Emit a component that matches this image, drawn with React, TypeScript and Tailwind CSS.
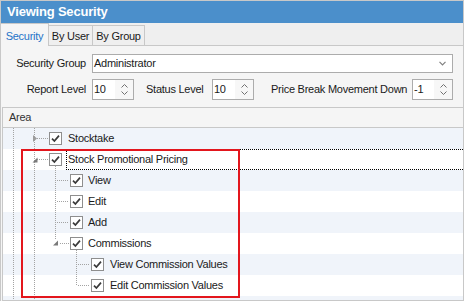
import React from "react";

type Row = { label: string; level: number; focused?: boolean };

const rows: Row[] = [
  { label: "Stocktake", level: 0 },
  { label: "Stock Promotional Pricing", level: 0, focused: true },
  { label: "View", level: 1 },
  { label: "Edit", level: 1 },
  { label: "Add", level: 1 },
  { label: "Commissions", level: 1 },
  { label: "View Commission Values", level: 2 },
  { label: "Edit Commission Values", level: 2 },
  { label: "", level: -1 },
];

const padByLevel: Record<number, string> = {
  0: "pl-[46px]",
  1: "pl-[67px]",
  2: "pl-[88px]",
  [-1]: "",
};

const textMlByLevel: Record<number, string> = {
  0: "ml-[6px]",
  1: "ml-[5px]",
  2: "ml-[6px]",
  [-1]: "",
};

function CheckBox() {
  return (
    <span className="w-[13px] h-[13px] border border-[#8e8e8e] bg-white flex items-center justify-center shrink-0">
      <svg width="11" height="11" viewBox="0 0 11 11">
        <path d="M2 5.6 L4.4 8 L9 2.6" stroke="#3a3a3a" strokeWidth="1.7" fill="none" />
      </svg>
    </span>
  );
}

function Spinner({ value }: { value: string }) {
  return (
    <div className="h-[21px] border border-[#acacac] bg-white flex items-center">
      <span className="pl-[1px] flex-1">{value}</span>
      <span className="w-[18px] h-full bg-[#f7f7f7] flex flex-col items-center justify-center gap-[3px]">
        <svg width="7" height="4" viewBox="0 0 7 4">
          <path d="M0.5 3.5 L3.5 0.5 L6.5 3.5" stroke="#707070" strokeWidth="1" fill="none" />
        </svg>
        <svg width="7" height="4" viewBox="0 0 7 4">
          <path d="M0.5 0.5 L3.5 3.5 L6.5 0.5" stroke="#707070" strokeWidth="1" fill="none" />
        </svg>
      </span>
    </div>
  );
}

function TreeLines() {
  const dot = { stroke: "#a3a3a3", strokeWidth: 1, strokeDasharray: "1 1", fill: "none" } as const;
  return (
    <svg className="absolute left-0 top-0 pointer-events-none" width="260" height="175" viewBox="0 0 260 175">
      <line x1="10.5" y1="0" x2="10.5" y2="175" {...dot} />
      <line x1="31.5" y1="0" x2="31.5" y2="175" {...dot} />
      <line x1="34" y1="10.5" x2="45" y2="10.5" {...dot} />
      <line x1="34" y1="31.5" x2="45" y2="31.5" {...dot} />
      <line x1="52.5" y1="38" x2="52.5" y2="112" {...dot} />
      <line x1="54" y1="52.5" x2="66" y2="52.5" {...dot} />
      <line x1="54" y1="73.5" x2="66" y2="73.5" {...dot} />
      <line x1="54" y1="94.5" x2="66" y2="94.5" {...dot} />
      <line x1="57" y1="115.5" x2="66" y2="115.5" {...dot} />
      <line x1="73.5" y1="122" x2="73.5" y2="157.5" {...dot} />
      <line x1="75" y1="136.5" x2="87" y2="136.5" {...dot} />
      <line x1="75" y1="157.5" x2="87" y2="157.5" {...dot} />
      {/* collapsed expander */}
      <polygon points="30,7 34,10.5 30,14" fill="#9c9c9c" />
      {/* expanded expanders */}
      <polygon points="34.5,29.5 34.5,34.5 29.5,34.5" fill="#7a7a7a" />
      <polygon points="55,112.5 55,117.5 50,117.5" fill="#7a7a7a" />
    </svg>
  );
}

export default function App() {
  return (
    <div className="w-[464px] h-[301px] relative bg-[#f5f5f5] border-l border-r border-t border-[#c8c8c8] flex flex-col overflow-hidden font-['Liberation_Sans',Arial,sans-serif] text-[11px] tracking-[-0.25px] text-[#1a1a1a]">
      {/* Title bar */}
      <div className="h-[22px] shrink-0 bg-[#4b8fcb] flex items-center pl-[6px] text-white font-bold text-[13px] tracking-[-0.2px]">
        Viewing Security
      </div>

      {/* Tabs */}
      <div className="h-[23px] shrink-0 bg-[#efefef] flex items-end">
        <div className="w-[48px] h-[23px] border-t border-r border-[#c8c8c8] bg-[#f5f5f5] flex items-center justify-center pt-[2px] text-[#1e73c8]">
          Security
        </div>
        <div className="w-[44px] h-[21px] border-t border-r border-b border-[#c8c8c8] flex items-center justify-center pt-[1px]">
          By User
        </div>
        <div className="w-[52px] h-[21px] border-t border-r border-b border-[#c8c8c8] flex items-center justify-center pt-[1px]">
          By Group
        </div>
        <div className="flex-1 h-[21px] border-b border-[#c8c8c8]" />
      </div>

      {/* Form */}
      <div className="pt-[8px] shrink-0">
        <div className="flex items-center h-[19px]">
          <span className="w-[85px] text-right">Security Group</span>
          <div className="ml-[6px] w-[361px] h-[19px] border border-[#acacac] bg-white flex items-center">
            <span className="pl-[1px] flex-1">Administrator</span>
            <svg className="mr-[6px]" width="7" height="5" viewBox="0 0 7 5">
              <path d="M0.5 0.8 L3.5 3.8 L6.5 0.8" stroke="#808080" strokeWidth="1.2" fill="none" />
            </svg>
          </div>
        </div>
        <div className="flex items-center h-[21px] mt-[6px]">
          <span className="w-[85px] text-right">Report Level</span>
          <div className="ml-[6px] w-[42px]">
            <Spinner value="10" />
          </div>
          <span className="ml-[12px] w-[58px]">Status Level</span>
          <div className="ml-[8px] w-[42px]">
            <Spinner value="10" />
          </div>
          <span className="ml-[17px] w-[137px]">Price Break Movement Down</span>
          <div className="ml-[4px] w-[41px]">
            <Spinner value="-1" />
          </div>
        </div>
      </div>

      {/* Grid */}
      <div className="mt-[7px] ml-[1px] flex-1 min-h-0 border-l border-t border-b border-[#c8c8c8] flex flex-col overflow-hidden">
        <div className="h-[20px] shrink-0 border-b border-[#c8c8c8] bg-[#f5f5f5] flex items-center pl-[6px] text-[#333333]">
          Area
        </div>
        <div className="relative flex-1 min-h-0 overflow-hidden">
          {rows.map((r, i) => (
            <div
              key={i}
              className={`h-[21px] flex items-stretch ${i % 2 === 0 ? "bg-[#f0f4fa]" : "bg-white"} ${padByLevel[r.level]}`}
            >
              {r.level >= 0 && (
                <>
                  <span className="flex items-center">
                    <CheckBox />
                  </span>
                  {r.focused ? (
                    <span className="ml-[4px] pl-[1px] flex-1 flex items-center border-t border-b border-l border-dotted border-black">
                      {r.label}
                    </span>
                  ) : (
                    <span className={`${textMlByLevel[r.level]} flex items-center`}>{r.label}</span>
                  )}
                </>
              )}
            </div>
          ))}
          <TreeLines />
          <div className="absolute left-[18px] top-[21px] w-[219px] h-[149px] border-2 border-[#e3161d] pointer-events-none" />
        </div>
      </div>
    </div>
  );
}
